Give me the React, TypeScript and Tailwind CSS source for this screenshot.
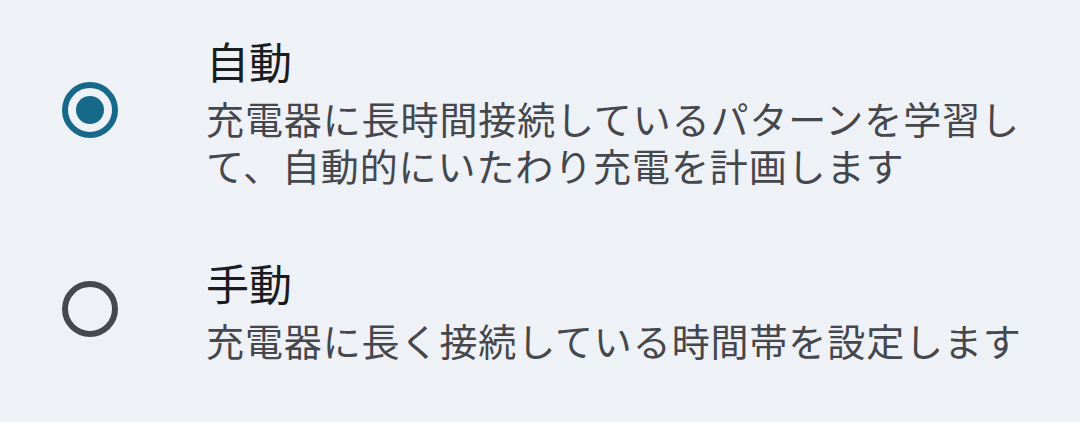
const options = [
  {
    id: "auto",
    title: "自動",
    summary: "充電器に長時間接続しているパターンを学習して、自動的にいたわり充電を計画します",
    checked: true,
  },
  {
    id: "manual",
    title: "手動",
    summary: "充電器に長く接続している時間帯を設定します",
    checked: false,
  },
];

function Radio({ checked }: { checked: boolean }) {
  return (
    <div
      className={`flex size-[56px] shrink-0 items-center justify-center rounded-full border-[6px] ${
        checked ? "border-[#17698a]" : "border-[#45484c]"
      }`}
    >
      {checked && <div className="size-[28px] rounded-full bg-[#17698a]" />}
    </div>
  );
}

export default function App() {
  return (
    <div
      className="flex h-[422px] w-[1080px] flex-col gap-[66px] bg-[#eef1f6] pt-[32px]"
      style={{ fontFamily: '"Noto Sans CJK JP", "Noto Sans", sans-serif' }}
    >
      {options.map((opt) => (
        <div key={opt.id} className="flex items-center pl-[62px]">
          <Radio checked={opt.checked} />
          <div className="ml-[88px] flex w-[836px] flex-col">
            <p className="text-[43px] leading-[56px] text-[#1b1c1f]">{opt.title}</p>
            <p className="mt-[6px] text-[38px] leading-[47px] tracking-[0.9px] text-[#45474c]">
              {opt.summary}
            </p>
          </div>
        </div>
      ))}
    </div>
  );
}
